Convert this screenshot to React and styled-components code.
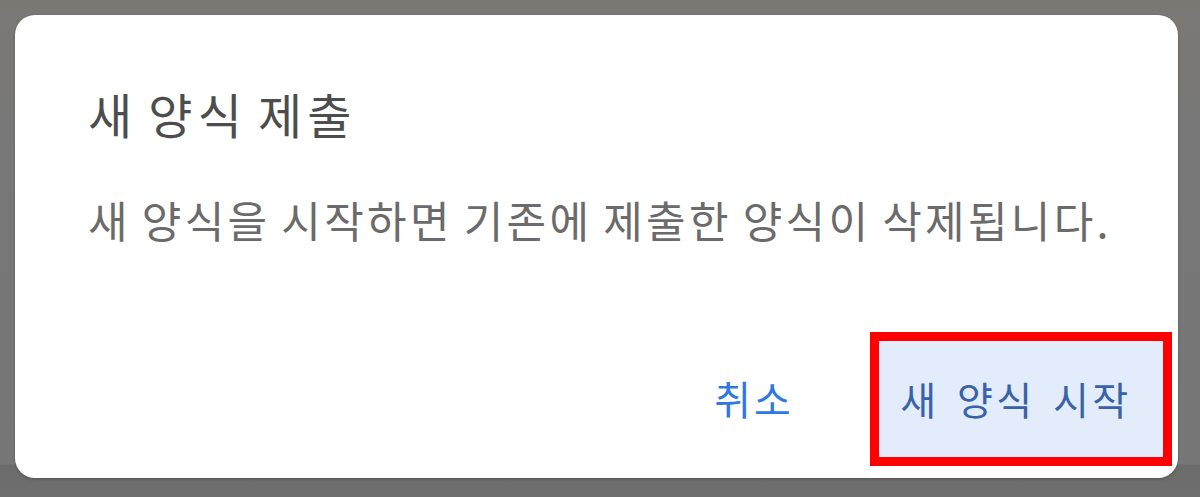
import React from 'react';
import styled, { createGlobalStyle } from 'styled-components';

const GlobalStyle = createGlobalStyle`
  html, body {
    margin: 0;
    padding: 0;
  }
  body {
    font-family: "Noto Sans CJK KR", "Noto Sans", sans-serif;
  }
`;

const Backdrop = styled('div')`
  width: 1200px;
  height: 497px;
  box-sizing: border-box;
  padding: 15px 22px 19px 15px;
  background: linear-gradient(
    to bottom,
    #7b7874 0px,
    #787878 120px,
    #777777 464px,
    #6c6c6c 465px,
    #6e6e6e 497px
  );
`;

const Dialog = styled('div')`
  height: 100%;
  box-sizing: border-box;
  background: #ffffff;
  border-radius: 20px;
  padding: 70px 12px 18px 73px;
  display: flex;
  flex-direction: column;
  box-shadow: 0 1px 3px rgba(0, 0, 0, 0.25);
`;

const Title = styled('h2')`
  margin: 0;
  font-size: 48px;
  line-height: 56px;
  font-weight: 400;
  letter-spacing: 5.2px;
  word-spacing: -5px;
  color: #4d4d4d;
`;

const Message = styled('p')`
  margin: 54px 0 0;
  font-size: 43px;
  line-height: 48px;
  letter-spacing: 3.3px;
  word-spacing: -2px;
  color: #6b6b6b;
`;

const Actions = styled('div')`
  margin-top: auto;
  display: flex;
  justify-content: flex-end;
  align-items: center;
  gap: 58px;
`;

const Button = styled('button')`
  position: relative;
  height: 124px;
  width: ${(p) => p.$width}px;
  border: none;
  border-radius: 12px;
  font-family: inherit;
  font-size: ${(p) => (p.$primary ? 39 : 40)}px;
  line-height: 48px;
  letter-spacing: ${(p) => (p.$primary ? 3.5 : 3)}px;
  word-spacing: 5px;
  padding: ${(p) => (p.$primary ? '0 10px 0 0' : '0')};
  cursor: pointer;
  background: ${(p) => (p.$primary ? '#e2ecfb' : 'transparent')};
  color: ${(p) => (p.$primary ? '#3a62a8' : '#2f78e4')};
  ${(p) => p.$highlight && `
    &::after {
      content: '';
      position: absolute;
      left: -6px;
      top: -4px;
      right: -6px;
      bottom: -6px;
      border: 9px solid #ff0000;
      pointer-events: none;
    }
  `}
`;

export default function App() {
  return (
    <>
      <GlobalStyle />
      <Backdrop>
        <Dialog>
          <Title>새 양식 제출</Title>
          <Message>새 양식을 시작하면 기존에 제출한 양식이 삭제됩니다.</Message>
          <Actions>
            <Button $width={128}>취소</Button>
            <Button $width={290} $primary $highlight>
              새 양식 시작
            </Button>
          </Actions>
        </Dialog>
      </Backdrop>
    </>
  );
}
